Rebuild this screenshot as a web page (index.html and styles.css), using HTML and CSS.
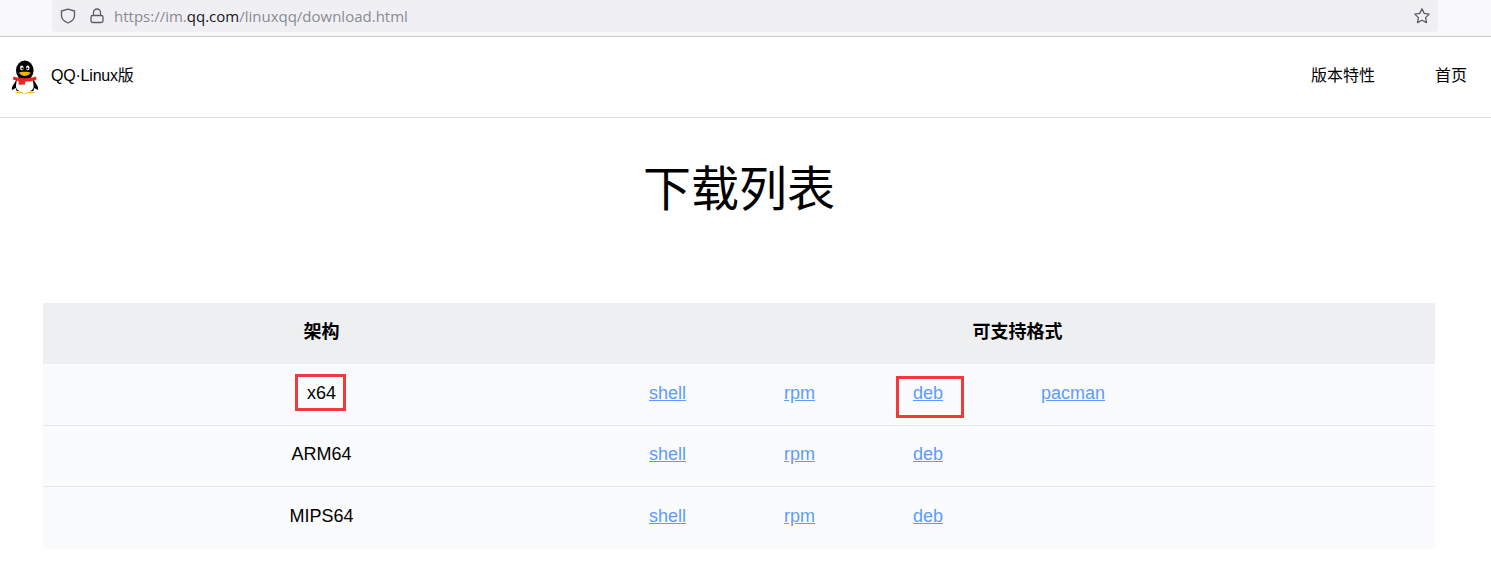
FILE: index.html
```html
<!DOCTYPE html>
<html lang="zh-CN">
<head>
<meta charset="utf-8">
<title>QQ Linux版 下载列表</title>
<link rel="stylesheet" href="styles.css">
</head>
<body>
<div class="chrome">
  <div class="urlbar">
    <svg class="shield" width="16" height="16" viewBox="0 0 16 16"><path d="M8 1.200 14.500 3v4.500c0 3.600-2.900 6-6.500 7.500-3.600-1.500-6.500-3.900-6.500-7.500V3z" fill="none" stroke="#5b5b66" stroke-width="1.300" stroke-linejoin="round"/></svg>
    <svg class="lock" width="16" height="16" viewBox="0 0 16 16"><path d="M4.500 7.500V4.500a3.500 3.500 0 0 1 7 0v3" fill="none" stroke="#5b5b66" stroke-width="1.300"/><rect x="2" y="7.500" width="12" height="7" rx="1.800" fill="none" stroke="#5b5b66" stroke-width="1.300"/></svg>
    <span class="url">https://im.<b class="host">qq.com</b>/linuxqq/download.html</span>
    <svg class="star" width="18" height="18" viewBox="0 0 18 18"><path d="M9 1.800l2.200 4.600 5 .7-3.600 3.500.9 5L9 13.200l-4.500 2.400.9-5L1.800 7.100l5-.7z" fill="none" stroke="#5b5b66" stroke-width="1.300" stroke-linejoin="round"/></svg>
  </div>
</div>
<header class="site-header">
  <a class="brand" href="#">
    <svg class="logo" width="28" height="34" viewBox="0 0 28 34">
      <path d="M4 32.500c2.500-1.500 6-1.500 8.500.5h3c2.500-2 6-2 8.500-.5-1 1.200-19 1.200-20 0z" fill="#f8b400"/>
      <path d="M6 19 1.500 26c-.8 1.800-.8 3.500-.3 4l3.500-2 1 3h16.600l1-3 3.500 2c.5-.5.5-2.200-.3-4l-4.500-7z" fill="#000"/>
      <ellipse cx="13.800" cy="10.500" rx="8.800" ry="10" fill="#000"/>
      <path d="M6 20c-.8 3-1 5-1 6.500 0 3.500 3.500 5.500 8.800 5.500s8.800-2 8.800-5.500c0-1.500-.2-3.500-1-6.500z" fill="#fff"/>
      <ellipse cx="10.800" cy="8" rx="1.700" ry="2.400" fill="#fff"/>
      <ellipse cx="16.800" cy="8" rx="1.700" ry="2.400" fill="#fff"/>
      <circle cx="11.200" cy="8.500" r=".9" fill="#000"/>
      <circle cx="16.400" cy="8.500" r=".9" fill="#000"/>
      <path d="M8 12.800c2-1.300 9.600-1.300 11.600 0-1.500 2.200-3.800 3.200-5.800 3.200s-4.300-1-5.800-3.200z" fill="#f8b400"/>
      <path d="M2.400 16.500c3.500 1.200 7.400 1.700 11.400 1.700s7.900-.5 11.400-1.700l.2 3.200c-3 1.300-6.500 1.800-11.100 1.900l-.3 2.900-6.200 .3-.3-3.900c-2-.3-3.700-.8-5.500-1.500z" fill="#e8261c"/>
    </svg>
    <span class="brand-name">QQ·Linux版</span>
  </a>
  <nav class="nav">
    <a href="#">版本特性</a>
    <a href="#">首页</a>
  </nav>
</header>
<main class="content">
  <h1 class="title">下载列表</h1>
  <table class="downloads">
    <thead>
      <tr><th class="arch">架构</th><th>可支持格式</th></tr>
    </thead>
    <tbody>
      <tr>
        <td class="arch"><span class="mark">x64<i class="box box-arch"></i></span></td>
        <td class="formats"><a href="#">shell</a><a href="#">rpm</a><span class="mark"><a href="#">deb</a><i class="box box-deb"></i></span><a href="#">pacman</a></td>
      </tr>
      <tr>
        <td class="arch">ARM64</td>
        <td class="formats"><a href="#">shell</a><a href="#">rpm</a><a href="#">deb</a></td>
      </tr>
      <tr>
        <td class="arch">MIPS64</td>
        <td class="formats"><a href="#">shell</a><a href="#">rpm</a><a href="#">deb</a></td>
      </tr>
    </tbody>
  </table>
</main>
</body>
</html>
```
FILE: styles.css
```css
* { box-sizing: border-box; }
html, body { margin: 0; padding: 0; background: #fff; }
body {
  font-family: "Liberation Sans", "Noto Sans CJK SC", sans-serif;
  color: #000;
  height: 568px;
  overflow: hidden;
}
a { color: inherit; text-decoration: none; }

.chrome {
  height: 37px;
  background: #f9f9fb;
  border-bottom: 1px solid #ccc;
  padding: 0 53px 0 52px;
}
.urlbar {
  height: 32px;
  background: #f0f0f4;
  border-radius: 0 0 4px 4px;
  display: flex;
  align-items: center;
  padding: 0 7px 0 8px;
}
.shield { flex: none; }
.lock { flex: none; margin-left: 13px; }
.url {
  flex: 1;
  margin-left: 9px;
  font-family: "Open Sans", sans-serif;
  font-size: 15px;
  color: #8a8a92;
  white-space: nowrap;
}
.host { font-weight: 400; color: #15141a; }
.star { flex: none; }

.site-header {
  height: 81px;
  border-bottom: 1px solid #dcdcdc;
  display: flex;
  align-items: center;
  justify-content: space-between;
  padding: 0 24px 0 11px;
  font-size: 16px;
}
.brand { display: flex; align-items: center; gap: 12px; }
.brand-name { padding-bottom: 6px; letter-spacing: -0.2px; }
.logo { display: block; }
.nav { display: flex; gap: 60px; padding-bottom: 6px; }

.content { padding: 0 56px 0 43px; }
.title {
  margin: 0;
  padding-top: 42px;
  height: 185px;
  text-align: center;
  font-size: 48px;
  font-weight: 400;
  line-height: 59px;
}
.downloads {
  width: 100%;
  border-collapse: collapse;
  table-layout: fixed;
  font-size: 18px;
}
.downloads th {
  height: 61px;
  background: #eeeff1;
  font-weight: 700;
  text-align: center;
  padding: 0 0 8px;
}
.downloads td {
  height: 61px;
  background: #fafbfc;
  border-bottom: 1px solid #e6e7e9;
  padding: 0 0 2px;
}
.downloads tbody tr:last-child td { border-bottom: 0; height: 63px; padding: 0 0 2px; }
.arch { width: 557px; text-align: center; }
.formats a { color: #5c9cff; text-decoration: underline; margin: 0 49px; }
.mark { position: relative; }
.box { position: absolute; border: 3px solid #f33a3a; }
.box-arch { left: -12px; right: -10px; top: -9px; bottom: -8px; }
.box-deb { left: 32px; width: 68px; top: -7px; height: 42px; }
```
